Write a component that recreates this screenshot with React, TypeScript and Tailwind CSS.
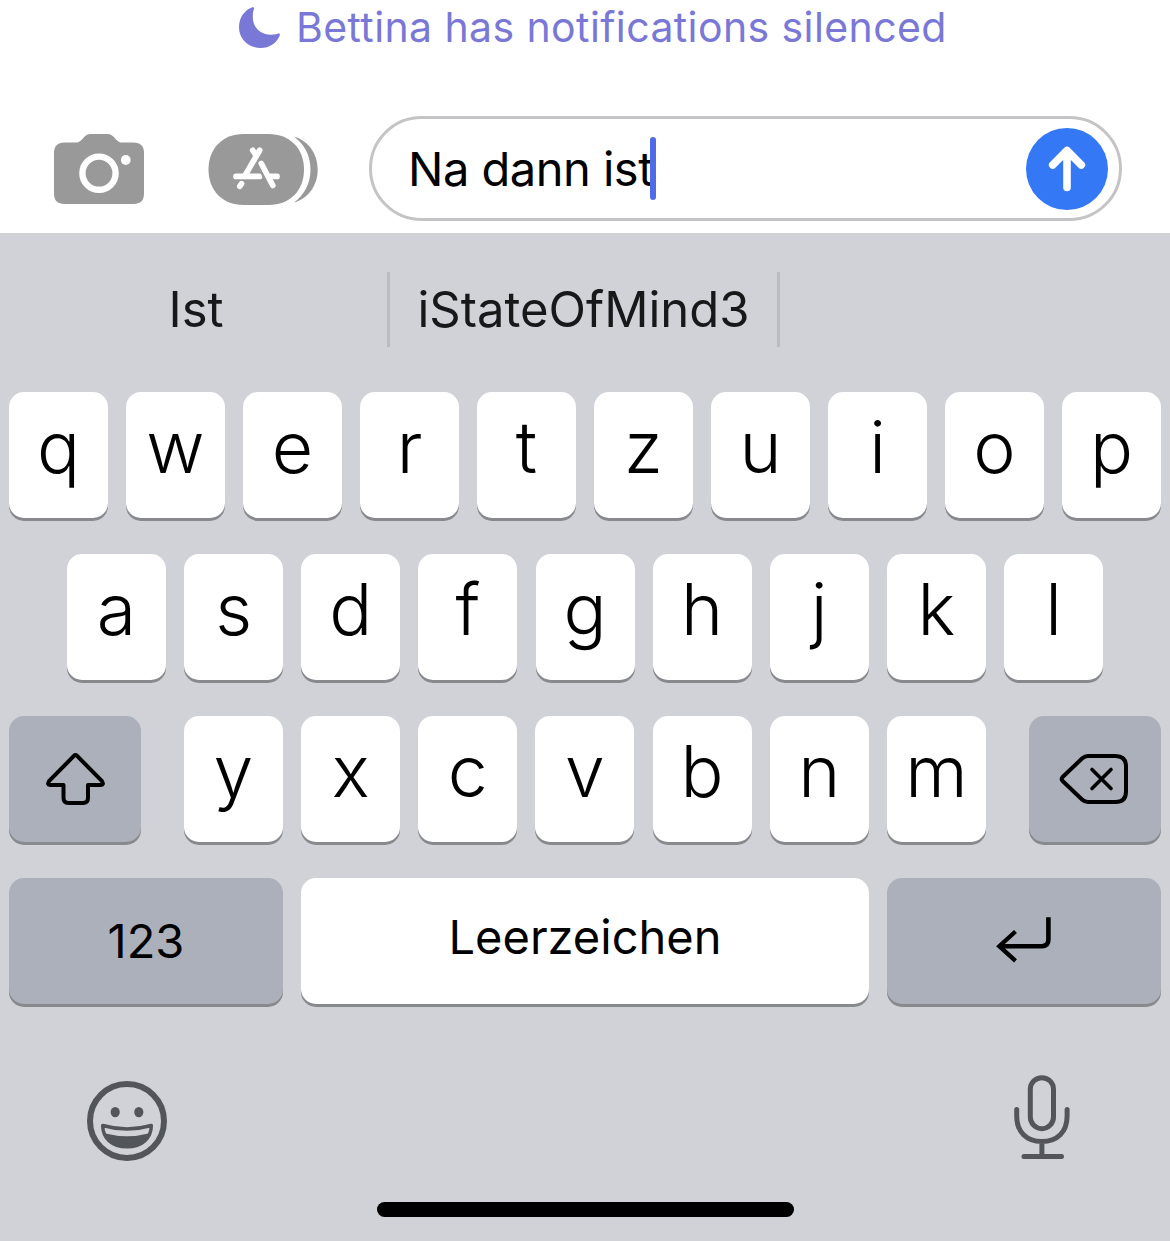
import React from "react";

function MoonIcon() {
  return (
    <svg className="h-[42px] w-[42px] shrink-0" viewBox="0 0 42 42" fill="#7a78d6">
      <path d="M13.4 .3C14.8 -.1 15.5 .7 15 2C14 4.4 13.8 7 13.8 10C13.8 20.500 21.500 27.800 32 27.800C34.800 27.800 37 27.400 39.300 26.600C40.600 26.100 41.200 26.900 40.800 28.200C38 36 30.500 41 21.500 41C9.500 41 0 32 0 20.200C0 10.800 5.200 3.300 13.400 .3Z" />
    </svg>
  );
}

function CameraIcon() {
  return (
    <svg className="h-[70px] w-[90px] shrink-0" viewBox="0 0 90 70">
      <path
        fill="#999999"
        d="M10.500 8.500H21.500C24.500 8.500 26 7.500 28 5.400L30.200 3C32.200 .9 33.700 0 36.500 0H53.500C56.300 0 57.800 .9 59.800 3L62 5.400C64 7.500 65.500 8.500 68.500 8.500H79.500Q90 8.500 90 19V59.500Q90 70 79.500 70H10.500Q0 70 0 59.500V19Q0 8.500 10.500 8.500Z"
      />
      <circle cx="45" cy="39.200" r="16.600" fill="none" stroke="#fff" strokeWidth="6.400" />
      <circle cx="71.800" cy="26" r="4.900" fill="#fff" />
    </svg>
  );
}

function AppStoreIcon() {
  return (
    <svg className="h-[72px] w-[111px] shrink-0" viewBox="0 0 111 72">
      <path fill="#999999" d="M86 2.400C101 7 109.700 20 109.700 35.500C109.700 51 101 64 86 68.600C96.500 60.500 102.500 49.500 102.500 35.500C102.500 21.500 96.500 10.500 86 2.400Z" />
      <path fill="#999999" d="M35.500 0H60.500C82 0 96 14.500 96 35.500C96 56.500 82 71 60.500 71H35.500C14.500 71 .500 56.500 .500 35.500C.500 14.500 14.500 0 35.500 0Z" />
      <g fill="none" stroke="#fff" strokeWidth="5.700" strokeLinecap="round">
        <path d="M51.700 16.300L36.500 42.400M44.700 16.300L48.200 21.800M28 42.400H51.500" />
        <path d="M53.300 29.500L64.800 51.500M62.500 42.400H69M33.500 49.700L31.800 52.300" />
      </g>
      <path d="M49.200 30.500L57.500 47" stroke="#999999" strokeWidth="1.800" />
    </svg>
  );
}

function SendIcon() {
  return (
    <svg className="h-[82px] w-[82px]" viewBox="0 0 82 82" fill="none" stroke="#fff" strokeWidth="7.600" strokeLinecap="round" strokeLinejoin="round">
      <path d="M41 23V59.500M26.700 37L41 22.500L55.300 37" />
    </svg>
  );
}

function ShiftIcon() {
  return (
    <svg className="h-[126px] w-[132px]" viewBox="0 0 132 126" fill="none" stroke="#000" strokeWidth="4" strokeLinejoin="round">
      <path d="M64.900 39.900Q66.500 38.300 68.100 39.900L93 65.200Q95.200 69 92 69H79V82Q79 87 74 87H59.500Q54.500 87 54.500 82V69H41Q37.800 69 40 65.200Z" />
    </svg>
  );
}

function DeleteIcon() {
  return (
    <svg className="h-[126px] w-[132px]" viewBox="0 0 132 126" fill="none" stroke="#000" strokeWidth="4" strokeLinejoin="round">
      <path d="M59 40H86.500Q97 40 97 50.500V75.500Q97 86 86.500 86H59Q55.800 86 53.300 83.700L33.600 65Q31.800 63 33.600 61L53.300 42.300Q55.800 40 59 40Z" />
      <path d="M63 53.500L82 72.500M82 53.500L63 72.500" strokeWidth="3.600" strokeLinecap="round" />
    </svg>
  );
}

function ReturnIcon() {
  return (
    <svg className="h-[126px] w-[274px]" viewBox="0 0 274 126" fill="none" stroke="#000" strokeWidth="4.600">
      <path d="M161.400 39.300V61.500Q161.400 68.200 154.700 68.200H113" />
      <path d="M128.500 53.500L112.300 68.200L128.500 82.800" strokeWidth="4.300" />
    </svg>
  );
}

function EmojiIcon() {
  return (
    <svg className="h-[80px] w-[80px]" viewBox="0 0 80 80">
      <circle cx="40" cy="40" r="37" fill="none" stroke="#52555a" strokeWidth="6" />
      <ellipse cx="28.200" cy="31.100" rx="4.600" ry="5.200" fill="#52555a" />
      <ellipse cx="51.800" cy="31.100" rx="4.600" ry="5.200" fill="#52555a" />
      <path d="M15.700 44.500Q40 51.500 64.300 44.500C64.300 57 55 65.800 40 65.800S15.700 57 15.700 44.500Z" fill="none" stroke="#52555a" strokeWidth="3.500" strokeLinejoin="round" />
      <path d="M18.500 52.500Q40 58 61.500 52.500C58.500 61.500 51 66 40 66S21.500 61.500 18.500 52.500Z" fill="#52555a" />
    </svg>
  );
}

function MicIcon() {
  return (
    <svg className="h-[86px] w-[56px]" viewBox="0 0 56 86" fill="none" stroke="#52555a" strokeWidth="5" strokeLinecap="round">
      <rect x="16.300" y="2.700" width="23.200" height="51" rx="11.600" />
      <path d="M2.700 34.500V41C2.700 57 12.500 66.500 27.900 66.500S53.100 57 53.100 41V34.500M27.900 67V80M10 81.500H47.500" />
    </svg>
  );
}

function LetterKey({ letter }: { letter: string }) {
  return (
    <button className="flex h-[126px] w-[99px] shrink-0 justify-center rounded-[15px] bg-white text-[71.500px] leading-[110px] font-light text-black shadow-[0_3px_0_#88898d]">
      {letter}
    </button>
  );
}

export default function App() {
  return (
    <main className="flex h-[1241px] w-[1170px] flex-col overflow-hidden bg-white font-['Inter',sans-serif]">
      <header className="flex h-[116px] items-start gap-[15px] pt-[7px] pl-[239px]">
        <MoonIcon />
        <p className="-mt-[7px] text-[41px] leading-[54px] tracking-[0.4px] whitespace-nowrap text-[#7a78d6]">
          Bettina has notifications silenced
        </p>
      </header>

      <section className="flex h-[117px] items-start pl-[54px]">
        <div className="flex h-[105px] items-center">
          <CameraIcon />
        </div>
        <div className="ml-[64px] pt-[18px]">
          <AppStoreIcon />
        </div>
        <div className="ml-[50px] flex h-[105px] w-[753px] items-center justify-between rounded-full border-[3px] border-[#c4c4c6] pr-[11px] pl-[36px]">
          <div className="flex items-center">
            <span className="text-[47px] leading-[60px] tracking-[-0.5px] whitespace-nowrap text-black">Na dann ist</span>
            <span className="-ml-[3px] h-[63px] w-[6px] rounded-full bg-[#4f6be8]" />
          </div>
          <button className="h-[82px] w-[82px] rounded-full bg-[#3478f6]">
            <SendIcon />
          </button>
        </div>
      </section>

      <section className="flex flex-1 flex-col bg-[#d1d2d8]">
        <div className="flex h-[159px] items-start pt-[39px] text-[49px] leading-[76px] text-[#17181a]">
          <div className="flex w-[387px] justify-center pl-[5px]">Ist</div>
          <div className="h-[75px] w-[3px] bg-[#bbbcc1]" />
          <div className="flex w-[387px] justify-center whitespace-nowrap">iStateOfMind3</div>
          <div className="h-[75px] w-[3px] bg-[#bbbcc1]" />
        </div>

        <div className="flex flex-col gap-[36px]">
          <div className="flex gap-[18px] pl-[9px]">
            {"qwertzuiop".split("").map((c) => <LetterKey key={c} letter={c} />)}
          </div>
          <div className="ml-[67px] flex w-[1036px] justify-between">
            {"asdfghjkl".split("").map((c) => <LetterKey key={c} letter={c} />)}
          </div>
          <div className="flex justify-between px-[9px]">
            <button className="h-[126px] w-[132px] rounded-[15px] bg-[#abb0bb] shadow-[0_3px_0_#88898d]"><ShiftIcon /></button>
            <div className="flex w-[802px] justify-between">
              {"yxcvbnm".split("").map((c) => <LetterKey key={c} letter={c} />)}
            </div>
            <button className="h-[126px] w-[132px] rounded-[15px] bg-[#abb0bb] shadow-[0_3px_0_#88898d]"><DeleteIcon /></button>
          </div>
          <div className="flex gap-[18px] px-[9px]">
            <button className="flex h-[126px] w-[274px] justify-center rounded-[15px] bg-[#abb0bb] text-[47px] leading-[126px] text-black shadow-[0_3px_0_#88898d]">123</button>
            <button className="flex h-[126px] w-[568px] justify-center rounded-[15px] bg-white text-[47px] leading-[118px] text-black shadow-[0_3px_0_#88898d]">Leerzeichen</button>
            <button className="h-[126px] w-[274px] rounded-[15px] bg-[#abb0bb] shadow-[0_3px_0_#88898d]"><ReturnIcon /></button>
          </div>
        </div>

        <div className="mt-[71px] flex h-[127px] items-start justify-between pr-[100px] pl-[87px]">
          <div className="pt-[6px]"><EmojiIcon /></div>
          <MicIcon />
        </div>
        <div className="ml-[377px] h-[15px] w-[417px] rounded-full bg-black" />
      </section>
    </main>
  );
}
